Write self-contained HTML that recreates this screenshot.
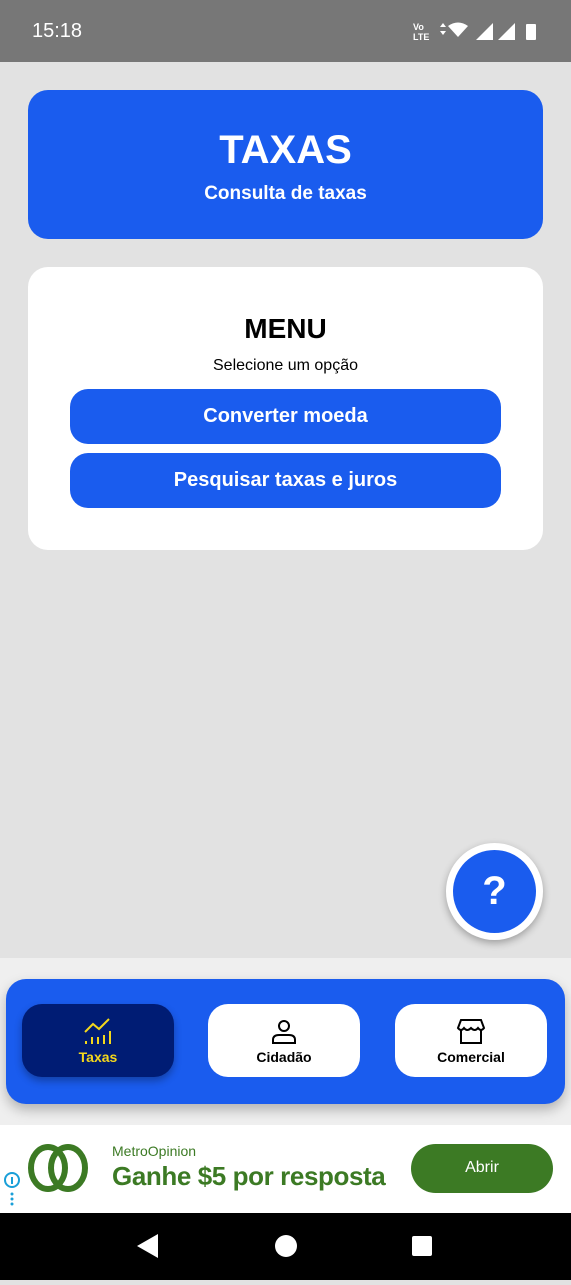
<!DOCTYPE html>
<html><head><meta charset="utf-8"><style>
*{margin:0;padding:0;box-sizing:border-box}
body{width:571px;height:1280px;background:#e2e2e2;font-family:"Liberation Sans",sans-serif;position:relative;overflow:hidden}
.abs{position:absolute}
.status{left:0;top:0;width:571px;height:62px;background:#777;color:#fff}
.hdr{left:28px;top:90px;width:515px;height:149px;background:#1a5cee;border-radius:20px;color:#fff;text-align:center}
.card{left:28px;top:267px;width:515px;height:283px;background:#fff;border-radius:20px;text-align:center}
.btn{position:absolute;left:42px;width:431px;height:55px;background:#1a5cee;border-radius:18px;color:#fff;font-size:20px;font-weight:bold;line-height:55px}
.nav{left:6px;top:979px;width:559px;height:125px;background:#1a5cee;border-radius:20px;box-shadow:0 6px 12px rgba(0,0,0,.25)}
.tab{position:absolute;top:25px;width:152px;height:73px;border-radius:20px;background:#fff;text-align:center;font-size:14px;font-weight:bold}
.tab svg{margin-top:14px;display:block;margin-left:auto;margin-right:auto}
.tab div{margin-top:3px}
</style></head><body>
<div class="abs status"><div class="abs" style="left:32px;top:20px;font-size:20px">15:18</div>
<div class="abs" style="left:413px;top:22px;font-size:9px;font-weight:bold;line-height:10px">Vo<br>LTE</div>
<svg class="abs" style="left:438px;top:20px" width="110" height="22"><path d="M2 7l3-4 3 4zM2 11l3 4 3-4z" fill="#fff"/><path d="M10 6q10-7 20 0l-10 11z" fill="#fff"/><path d="M38 20h17V3z" fill="#fff"/><path d="M60 20h17V3z" fill="#fff"/><rect x="88" y="4" width="10" height="16" rx="1" fill="#fff"/></svg></div>
<div class="abs" style="left:0;top:958px;width:571px;height:167px;background:#efefef"></div>
<div class="abs hdr"><div style="margin-top:38px;font-size:40px;font-weight:bold">TAXAS</div><div style="margin-top:10px;font-size:19px;font-weight:bold">Consulta de taxas</div></div>
<div class="abs card"><div style="margin-top:46px;font-size:28px;font-weight:bold">MENU</div><div style="margin-top:12px;font-size:16px">Selecione um opção</div>
<div class="btn" style="top:122px">Converter moeda</div><div class="btn" style="top:186px">Pesquisar taxas e juros</div></div>
<div class="abs" style="left:446px;top:843px;width:97px;height:97px;border-radius:50%;background:#fff;box-shadow:0 3px 8px rgba(0,0,0,.3)"><div style="position:absolute;left:7px;top:7px;width:83px;height:83px;border-radius:50%;background:#1a5cee;color:#fff;font-size:40px;font-weight:bold;text-align:center;line-height:83px">?</div></div>
<div class="abs nav">
<div class="tab" style="left:16px;background:#001c74;color:#f4d81c;box-shadow:0 4px 8px rgba(0,0,0,.3)"><svg width="30" height="28"><path d="M2 14l8-8 6 5 10-10" stroke="#f4d81c" stroke-width="2" fill="none"/><path d="M3 26v-3M9 26v-7M15 26v-7M21 26v-9M27 26v-13" stroke="#f4d81c" stroke-width="2"/></svg><div>Taxas</div></div>
<div class="tab" style="left:202px"><svg width="30" height="28"><circle cx="15" cy="8" r="5" stroke="#000" stroke-width="2" fill="none"/><path d="M4 25v-3q0-5 6-5h10q6 0 6 5v3z" stroke="#000" stroke-width="2" fill="none"/></svg><div>Cidadão</div></div>
<div class="tab" style="left:389px"><svg width="30" height="28"><path d="M5 2h20l3 8q-3 4-6 0-3 4-7 0-4 4-7 0-3 4-6 0z M5 12v13h20v-13" stroke="#000" stroke-width="2" fill="none"/></svg><div>Comercial</div></div>
</div>
<div class="abs" style="left:0;top:1125px;width:571px;height:88px;background:#fff">
<svg class="abs" style="left:2px;top:45px" width="20" height="40"><circle cx="10" cy="10" r="7" stroke="#1a9fd8" stroke-width="2" fill="none"/><path d="M10 7v7" stroke="#1a9fd8" stroke-width="2"/><circle cx="10" cy="24" r="1.5" fill="#1a9fd8"/><circle cx="10" cy="29" r="1.5" fill="#1a9fd8"/><circle cx="10" cy="34" r="1.5" fill="#1a9fd8"/></svg>
<svg class="abs" style="left:28px;top:18px" width="62" height="50"><ellipse cx="20" cy="25" rx="17" ry="21" stroke="#3c7a24" stroke-width="6" fill="none"/><ellipse cx="40" cy="25" rx="17" ry="21" stroke="#3c7a24" stroke-width="6" fill="none"/></svg>
<div class="abs" style="left:112px;top:18px;font-size:14px;color:#3c7a24">MetroOpinion</div>
<div class="abs" style="left:112px;top:36px;font-size:26px;font-weight:bold;color:#3c7a24;letter-spacing:-0.4px">Ganhe $5 por resposta</div>
<div class="abs" style="left:411px;top:19px;width:142px;height:49px;border-radius:25px;background:#3c7a24;color:#fff;text-align:center;line-height:47px;font-size:16px">Abrir</div></div>
<div class="abs" style="left:0;top:1213px;width:571px;height:67px;background:#000">
<svg width="571" height="67"><path d="M137 33l21-12v24z" fill="#fff"/><circle cx="286" cy="33" r="11" fill="#fff"/><rect x="412" y="23" width="20" height="20" rx="2" fill="#fff"/></svg></div>
</body></html>
